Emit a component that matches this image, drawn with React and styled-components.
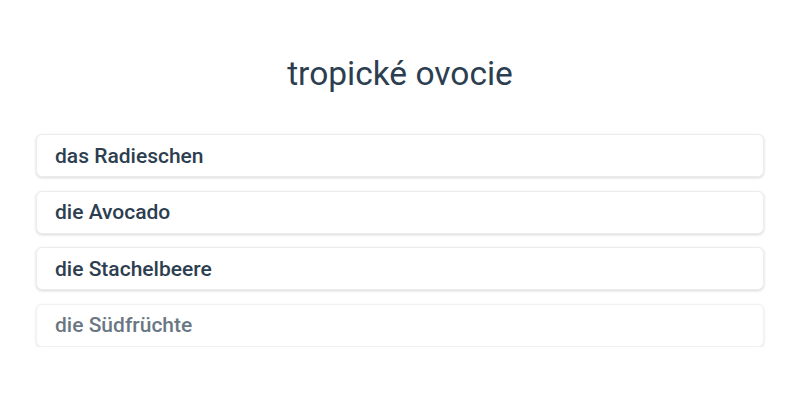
import styled, { createGlobalStyle } from "styled-components";

const GlobalStyle = createGlobalStyle`
  body {
    margin: 0;
    background: #ffffff;
    font-family: Roboto, "Noto Sans", sans-serif;
  }
`;

const Page = styled.div`
  width: 728px;
  margin: 0 auto;
  padding-top: 54px;
  display: flex;
  flex-direction: column;
`;

const Title = styled.h1`
  margin: 0 0 40px;
  text-align: center;
  font-size: 33.5px;
  font-weight: 400;
  color: #2c3e50;
  line-height: 40px;
`;

const List = styled.div`
  display: flex;
  flex-direction: column;
  gap: 13.5px;
`;

const Option = styled.div`
  height: 43px;
  display: flex;
  align-items: center;
  padding: 0 18px;
  border-radius: 6px;
  background: #fff;
  border: 1px solid #ececec;
  box-sizing: border-box;
  box-shadow: 0 1px 3px rgba(0, 0, 0, 0.16);
  font-size: 21px;
  font-weight: 500;
  color: #2c3e50;
  opacity: ${(p) => (p.$faded ? 0.7 : 1)};
`;

const options = ["das Radieschen", "die Avocado", "die Stachelbeere", "die Südfrüchte"];

export default function App() {
  return (
    <>
      <GlobalStyle />
      <Page>
        <Title>tropické ovocie</Title>
        <List>
          {options.map((o, i) => (
            <Option key={o} $faded={i === options.length - 1}>
              {o}
            </Option>
          ))}
        </List>
      </Page>
    </>
  );
}
